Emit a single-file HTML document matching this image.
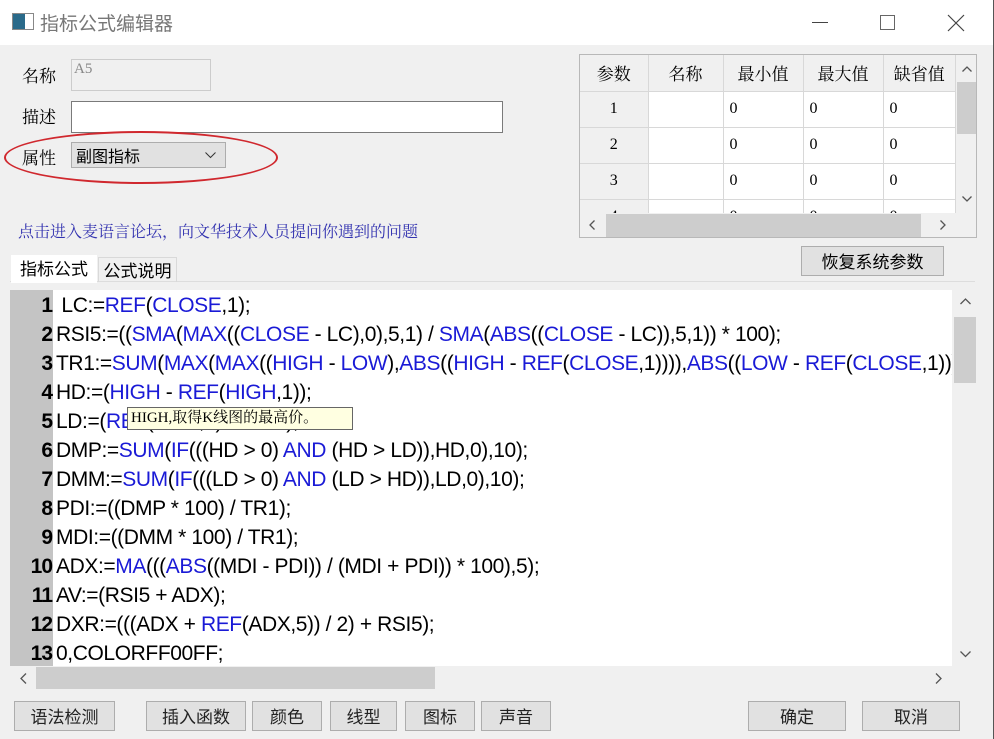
<!DOCTYPE html>
<html><head><meta charset="utf-8"><style>
*{box-sizing:border-box;margin:0;padding:0}
body{width:994px;height:739px;background:#f0f0f0;position:relative;overflow:hidden;font-family:"Liberation Sans","Noto Sans CJK SC",sans-serif;color:#000}
.a{position:absolute}
.cj{font-family:"Noto Serif CJK SC","Noto Sans CJK SC",serif}
.btn{position:absolute;top:701px;height:30px;background:#e1e1e1;border:1px solid #adadad;font-size:17px;text-align:center;line-height:28px;font-family:"Noto Sans CJK SC",sans-serif;color:#222}
.code{position:absolute;left:10px;top:290px;width:942px;height:376px;background:#fff;overflow:hidden}
.gut{position:absolute;left:0;top:0;width:43px;height:376px;background:#c4c4c4}
.ln{position:absolute;left:0;height:29px;font-size:21px;line-height:29px;white-space:nowrap;letter-spacing:-0.4px;top:1px}
.ln b{display:inline-block;width:46px;text-align:right;font-weight:bold;padding-right:4px;letter-spacing:-1px}
.ln span.k{color:#1a1ad6}
td{border-right:1px solid #d8d8d8;border-bottom:1px solid #d8d8d8;font-size:16px;height:36px;padding-left:6px}
</style></head><body>
<div class="a" style="left:0;top:0;width:994px;height:45px;background:#fff"></div>
<div class="a" style="left:12px;top:13px;width:22px;height:17px;border:1px solid #888;background:linear-gradient(90deg,#2a6a8a 60%,#fff 60%)"></div>
<div class="a" style="left:40px;top:9px;font-size:19px;color:#777;font-family:'Noto Sans CJK SC',sans-serif">指标公式编辑器</div>
<div class="a" style="left:812px;top:22px;width:16px;height:1px;background:#444"></div>
<div class="a" style="left:880px;top:15px;width:15px;height:15px;border:1px solid #666"></div>
<svg class="a" style="left:947px;top:14px" width="18" height="18"><path d="M1 1L17 17M17 1L1 17" stroke="#444" stroke-width="1.2"/></svg>
<div class="a" style="left:993px;top:0;width:1px;height:739px;background:#555"></div>

<div class="a cj" style="left:22px;top:62px;font-size:17px">名称</div>
<div class="a" style="left:71px;top:59px;width:140px;height:32px;border:1px solid #ccc;background:#f0f0f0;font-family:'Liberation Serif';font-size:15px;color:#888;padding:1px 2px">A5</div>
<div class="a cj" style="left:22px;top:103px;font-size:17px">描述</div>
<div class="a" style="left:71px;top:101px;width:432px;height:32px;border:1px solid #7a7a7a;background:#fff"></div>
<div class="a cj" style="left:22px;top:144px;font-size:17px">属性</div>
<div class="a" style="left:71px;top:142px;width:155px;height:26px;border:1px solid #adadad;background:#e1e1e1;font-family:'Noto Sans CJK SC';font-size:16px;line-height:24px;padding-left:4px">副图指标<svg style="position:absolute;right:9px;top:9px" width="11" height="7"><path d="M0.5 0.5L5.5 5.5L10.5 0.5" stroke="#333" fill="none"/></svg></div>
<div class="a" style="left:4px;top:131px;width:274px;height:53px;border:2px solid #d0282e;border-radius:50%"></div>
<div class="a cj" style="left:18px;top:219px;font-size:16px;color:#3333b0">点击进入麦语言论坛，向文华技术人员提问你遇到的问题</div>

<div class="a" style="left:579px;top:54px;width:398px;height:184px;border:1px solid #b8b8b8;background:#fff;overflow:hidden">
<table style="border-collapse:collapse;font-family:'Liberation Serif','Noto Serif CJK SC',serif;width:376px">
<tr style="background:#f0f0f0"><td style="width:68px;text-align:center;height:35px;font-size:17px;padding:0">参数</td><td style="width:75px;text-align:center;padding:0;font-size:17px">名称</td><td style="width:80px;text-align:center;padding:0;font-size:17px">最小值</td><td style="width:80px;text-align:center;padding:0;font-size:17px">最大值</td><td style="text-align:center;padding:0;font-size:17px">缺省值</td></tr>
<tr><td style="background:#f0f0f0;text-align:center;padding:0">1</td><td></td><td>0</td><td>0</td><td>0</td></tr>
<tr><td style="background:#f0f0f0;text-align:center;padding:0">2</td><td></td><td>0</td><td>0</td><td>0</td></tr>
<tr><td style="background:#f0f0f0;text-align:center;padding:0">3</td><td></td><td>0</td><td>0</td><td>0</td></tr>
<tr><td style="background:#f0f0f0;text-align:center;padding:0">4</td><td></td><td>0</td><td>0</td><td>0</td></tr>
</table>
<div class="a" style="left:376px;top:0;width:21px;height:158px;background:#f0f0f0"><div class="a" style="left:1px;top:27px;width:19px;height:52px;background:#cdcdcd"></div>
<svg class="a" style="left:6px;top:11px" width="10" height="6"><path d="M0.5 5.5L5 1L9.5 5.5" stroke="#555" fill="none" stroke-width="1.3"/></svg>
<svg class="a" style="left:6px;top:141px" width="10" height="6"><path d="M0.5 0.5L5 5L9.5 0.5" stroke="#555" fill="none" stroke-width="1.3"/></svg></div>
<div class="a" style="left:0;top:158px;width:397px;height:25px;background:#f0f0f0"><div class="a" style="left:26px;top:1px;width:315px;height:23px;background:#cdcdcd"></div>
<svg class="a" style="left:9px;top:7px" width="6" height="10"><path d="M5.5 0.5L1 5L5.5 9.5" stroke="#555" fill="none" stroke-width="1.3"/></svg>
<svg class="a" style="left:360px;top:7px" width="6" height="10"><path d="M0.5 0.5L5 5L0.5 9.5" stroke="#555" fill="none" stroke-width="1.3"/></svg></div>
</div>
<div class="a" style="left:801px;top:246px;width:143px;height:30px;border:1px solid #adadad;background:#e1e1e1;font-family:'Noto Sans CJK SC';font-size:17px;text-align:center;line-height:28px">恢复系统参数</div>

<div class="a" style="left:10px;top:281px;width:965px;height:1px;background:#ddd"></div>
<div class="a" style="left:11px;top:255px;width:86px;height:28px;background:#fff;font-family:'Noto Sans CJK SC';font-size:17px;text-align:center;line-height:26px">指标公式</div>
<div class="a" style="left:98px;top:257px;width:79px;height:25px;border:1px solid #d9d9d9;border-bottom:none;font-family:'Noto Sans CJK SC';font-size:17px;text-align:center;line-height:23px">公式说明</div>

<div class="code"><div class="gut"></div>
<div class="ln" style="top:1px"><b>1</b> LC:=<span class="k">REF</span>(<span class="k">CLOSE</span>,1);</div>
<div class="ln" style="top:30px"><b>2</b>RSI5:=((<span class="k">SMA</span>(<span class="k">MAX</span>((<span class="k">CLOSE</span> - LC),0),5,1) / <span class="k">SMA</span>(<span class="k">ABS</span>((<span class="k">CLOSE</span> - LC)),5,1)) * 100);</div>
<div class="ln" style="top:59px"><b>3</b>TR1:=<span class="k">SUM</span>(<span class="k">MAX</span>(<span class="k">MAX</span>((<span class="k">HIGH</span> - <span class="k">LOW</span>),<span class="k">ABS</span>((<span class="k">HIGH</span> - <span class="k">REF</span>(<span class="k">CLOSE</span>,1)))),<span class="k">ABS</span>((<span class="k">LOW</span> - <span class="k">REF</span>(<span class="k">CLOSE</span>,1)))),</div>
<div class="ln" style="top:88px"><b>4</b>HD:=(<span class="k">HIGH</span> - <span class="k">REF</span>(<span class="k">HIGH</span>,1));</div>
<div class="ln" style="top:117px"><b>5</b>LD:=(<span class="k">REF</span>(<span class="k">LOW</span>,1) - <span class="k">LOW</span>);</div>
<div class="ln" style="top:146px"><b>6</b>DMP:=<span class="k">SUM</span>(<span class="k">IF</span>(((HD &gt; 0) <span class="k">AND</span> (HD &gt; LD)),HD,0),10);</div>
<div class="ln" style="top:175px"><b>7</b>DMM:=<span class="k">SUM</span>(<span class="k">IF</span>(((LD &gt; 0) <span class="k">AND</span> (LD &gt; HD)),LD,0),10);</div>
<div class="ln" style="top:204px"><b>8</b>PDI:=((DMP * 100) / TR1);</div>
<div class="ln" style="top:233px"><b>9</b>MDI:=((DMM * 100) / TR1);</div>
<div class="ln" style="top:262px"><b>10</b>ADX:=<span class="k">MA</span>(((<span class="k">ABS</span>((MDI - PDI)) / (MDI + PDI)) * 100),5);</div>
<div class="ln" style="top:291px"><b>11</b>AV:=(RSI5 + ADX);</div>
<div class="ln" style="top:320px"><b>12</b>DXR:=(((ADX + <span class="k">REF</span>(ADX,5)) / 2) + RSI5);</div>
<div class="ln" style="top:349px"><b>13</b>0,COLORFF00FF;</div>
<div class="a" style="left:117px;top:117px;width:226px;height:23px;background:#ffffe1;border:1px solid #666;font-family:'Liberation Serif','Noto Serif CJK SC',serif;font-size:15px;line-height:21px;padding-left:3px">HIGH,取得K线图的最高价。</div>
</div>
<div class="a" style="left:952px;top:290px;width:26px;height:376px;background:#f0f0f0"><div class="a" style="left:2px;top:27px;width:22px;height:66px;background:#cdcdcd"></div>
<svg class="a" style="left:8px;top:8px" width="11" height="7"><path d="M0.5 6L5.5 1L10.5 6" stroke="#555" fill="none" stroke-width="1.3"/></svg>
<svg class="a" style="left:8px;top:361px" width="11" height="7"><path d="M0.5 0.5L5.5 5.5L10.5 0.5" stroke="#555" fill="none" stroke-width="1.3"/></svg></div>
<div class="a" style="left:10px;top:666px;width:942px;height:24px;background:#f0f0f0"><div class="a" style="left:26px;top:1px;width:399px;height:22px;background:#cdcdcd"></div>
<svg class="a" style="left:10px;top:7px" width="7" height="11"><path d="M6 0.5L1 5.5L6 10.5" stroke="#555" fill="none" stroke-width="1.3"/></svg>
<svg class="a" style="left:925px;top:7px" width="7" height="11"><path d="M1 0.5L6 5.5L1 10.5" stroke="#555" fill="none" stroke-width="1.3"/></svg></div>

<div class="btn" style="left:14px;width:101px">语法检测</div>
<div class="btn" style="left:146px;width:100px">插入函数</div>
<div class="btn" style="left:252px;width:70px">颜色</div>
<div class="btn" style="left:330px;width:67px">线型</div>
<div class="btn" style="left:405px;width:70px">图标</div>
<div class="btn" style="left:481px;width:70px">声音</div>
<div class="btn" style="left:748px;width:98px">确定</div>
<div class="btn" style="left:862px;width:98px">取消</div>
</body></html>
